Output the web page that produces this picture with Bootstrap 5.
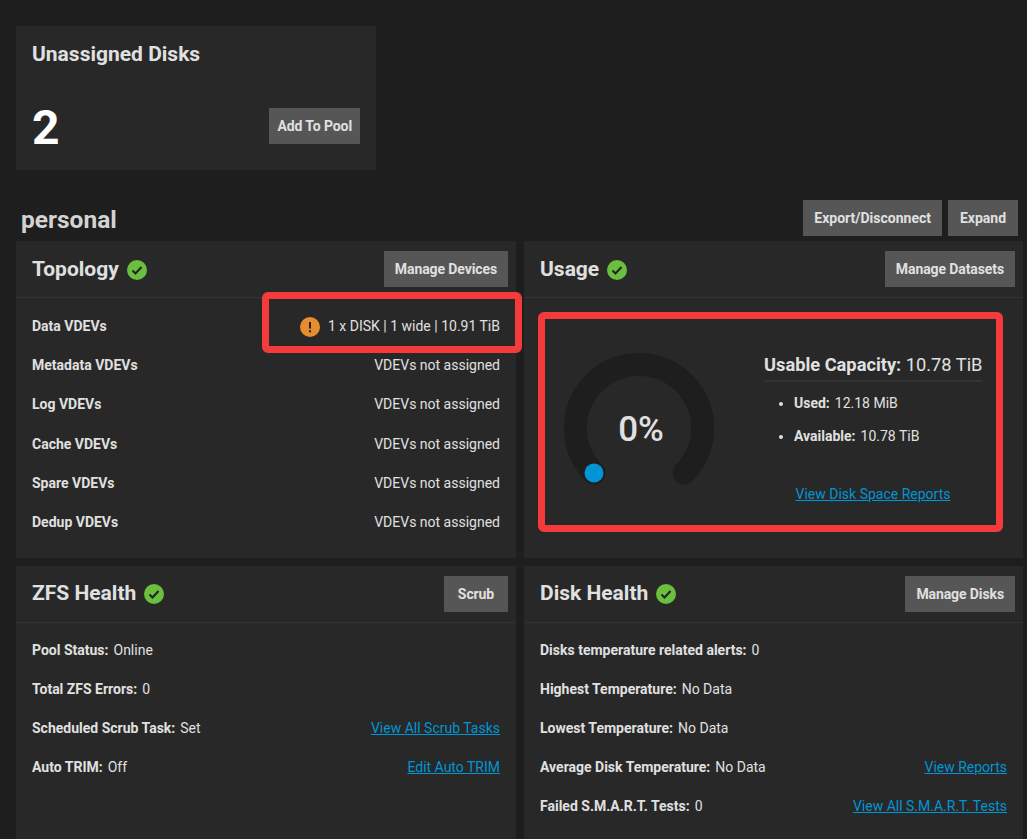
<!DOCTYPE html>
<html lang="en">
<head>
    <meta charset="UTF-8">
    <meta name="viewport" content="width=device-width, initial-scale=1.0">
    <title>Storage Dashboard</title>
    <link href="https://cdn.jsdelivr.net/npm/bootstrap@5.3.0/dist/css/bootstrap.min.css" rel="stylesheet">
    <style>
        body {
            background-color: #1e1e1e;
            color: #e0e0e0;
            font-family: Roboto, "Liberation Sans", sans-serif;
            font-size: 14px;
            position: relative;
            padding: 26px 4px 0 16px;
            height: 839px;
            overflow: hidden;
        }
        .panel {
            background-color: #282828;
            border: 0;
            border-radius: 0;
        }
        .unassigned {
            width: 360px;
            height: 144px;
            padding: 16px;
        }
        .unassigned h3 {
            font-size: 21px;
            font-weight: 700;
            line-height: 24px;
            margin: 0;
        }
        .big-num {
            font-size: 48px;
            font-weight: 700;
            line-height: 56px;
            color: #fff;
            margin: 2px 0 -2px;
        }
        .act-btn {
            background-color: #565656;
            color: #e0e0e0;
            border: 0;
            border-radius: 0;
            font-size: 14px;
            font-weight: 700;
            height: 36px;
            line-height: 36px;
            min-width: 64px;
            padding: 0 11px;
            white-space: nowrap;
        }
        .panel .act-btn {
            letter-spacing: -0.1px;
        }
        .pool-head {
            height: 41px;
            margin: 30px 5px 0 5px;
        }
        .pool-head h2 {
            font-size: 24.5px;
            font-weight: 700;
            margin: 5px 0 0;
            color: #d3d3d3;
        }
        .pool-btns {
            gap: 6px;
        }
        .pool-btns .act-btn:last-child {
            min-width: 70px;
        }
        .panels {
            display: grid;
            grid-template-columns: 500px 499px;
            grid-template-rows: 317px 273px;
            gap: 8px;
        }
        .panel-head {
            height: 57px;
            padding: 0 8px 0 16px;
            border-bottom: 1px solid #333;
        }
        .panel-head h3 {
            font-size: 21px;
            font-weight: 700;
            margin: 0;
        }
        .first-row h3 {
            padding-top: 2px;
        }
        .panel-rows {
            padding: 9px 16px 0;
        }
        .panel-rows.tight {
            padding-top: 8px;
        }
        .info-row {
            height: 39.2px;
        }
        .tight .info-row {
            height: 39px;
        }
        .info-row b, .cap-title b, .cap-list b {
            font-weight: 700;
            margin-right: 5px;
        }
        .info-row a, .report-link {
            color: #0095d5;
        }
        .usage-body {
            padding: 0 41px 0 40px;
            height: 260px;
        }
        .gauge-num {
            font-size: 35px;
            font-weight: 500;
            fill: #e0e0e0;
            font-family: Roboto, sans-serif;
        }
        .cap-col {
            width: 218px;
            height: 170px;
            margin-top: 16px;
        }
        .cap-title {
            font-size: 18.25px;
            line-height: 28px;
            padding-bottom: 1px;
            border-bottom: 2px solid #333;
            white-space: nowrap;
        }
        .cap-title b {
            margin-right: 0;
        }
        .cap-list {
            padding-left: 30px;
            margin: 5px 0 0;
        }
        .cap-list li {
            height: 33px;
            line-height: 33px;
        }
        .report-link {
            display: block;
            text-align: center;
            margin-top: 31px;
        }
        .callout {
            position: absolute;
            border: 7px solid #f43b3b;
            border-radius: 6px;
            pointer-events: none;
        }
        .callout-top {
            left: 262px;
            top: 292px;
            width: 260px;
            height: 61px;
        }
        .callout-usage {
            left: 538px;
            top: 312px;
            width: 465px;
            height: 220px;
        }
    </style>
</head>
<body>
    <div class="panel unassigned d-flex flex-column justify-content-between">
        <h3>Unassigned Disks</h3>
        <div class="d-flex justify-content-between align-items-center">
            <span class="big-num">2</span>
            <button class="act-btn px-2" type="button">Add To Pool</button>
        </div>
    </div>

    <div class="pool-head d-flex justify-content-between align-items-start">
        <h2>personal</h2>
        <div class="d-flex align-items-start pool-btns">
            <button class="act-btn" type="button">Export/Disconnect</button>
            <button class="act-btn" type="button">Expand</button>
        </div>
    </div>

    <div class="panels">
        <section class="panel first-row">
            <div class="panel-head d-flex justify-content-between align-items-center">
                <h3 class="d-flex align-items-center gap-2">Topology
                    <svg width="20" height="20" viewBox="0 0 20 20"><circle cx="10" cy="10" r="10" fill="#6bbf3f"/><path d="M5.5 10.5l3 3 6-6.5" fill="none" stroke="#222" stroke-width="2"/></svg>
                </h3>
                <button class="act-btn" type="button">Manage Devices</button>
            </div>
            <div class="panel-rows">
                <div class="info-row d-flex justify-content-between align-items-center">
                    <b>Data VDEVs</b>
                    <span class="d-flex align-items-center gap-2">
                        <svg width="20" height="20" viewBox="0 0 20 20"><circle cx="10" cy="10" r="10" fill="#e68d2f"/><path d="M10 5v6.5M10 13.2v2" stroke="#222" stroke-width="2" fill="none"/></svg>
                        1 x DISK | 1 wide | 10.91 TiB
                    </span>
                </div>
                <div class="info-row d-flex justify-content-between align-items-center"><b>Metadata VDEVs</b><span>VDEVs not assigned</span></div>
                <div class="info-row d-flex justify-content-between align-items-center"><b>Log VDEVs</b><span>VDEVs not assigned</span></div>
                <div class="info-row d-flex justify-content-between align-items-center"><b>Cache VDEVs</b><span>VDEVs not assigned</span></div>
                <div class="info-row d-flex justify-content-between align-items-center"><b>Spare VDEVs</b><span>VDEVs not assigned</span></div>
                <div class="info-row d-flex justify-content-between align-items-center"><b>Dedup VDEVs</b><span>VDEVs not assigned</span></div>
            </div>
        </section>

        <section class="panel first-row">
            <div class="panel-head d-flex justify-content-between align-items-center">
                <h3 class="d-flex align-items-center gap-2">Usage
                    <svg width="20" height="20" viewBox="0 0 20 20"><circle cx="10" cy="10" r="10" fill="#6bbf3f"/><path d="M5.5 10.5l3 3 6-6.5" fill="none" stroke="#222" stroke-width="2"/></svg>
                </h3>
                <button class="act-btn" type="button">Manage Datasets</button>
            </div>
            <div class="usage-body d-flex justify-content-between align-items-center">
                <svg width="150" height="150" viewBox="0 0 150 150">
                    <path d="M30 120A63.6 63.6 0 1 1 120 120" fill="none" stroke="#1e1e1e" stroke-width="23" stroke-linecap="round"/>
                    <circle cx="30" cy="120" r="9.5" fill="#0095d5"/>
                    <text x="77" y="88" text-anchor="middle" class="gauge-num">0%</text>
                </svg>
                <div class="cap-col">
                    <div class="cap-title"><b>Usable Capacity:</b> 10.78 TiB</div>
                    <ul class="cap-list">
                        <li><b>Used:</b>12.18 MiB</li>
                        <li><b>Available:</b>10.78 TiB</li>
                    </ul>
                    <a class="report-link" href="#">View Disk Space Reports</a>
                </div>
            </div>
        </section>

        <section class="panel">
            <div class="panel-head d-flex justify-content-between align-items-center">
                <h3 class="d-flex align-items-center gap-2">ZFS Health
                    <svg width="20" height="20" viewBox="0 0 20 20"><circle cx="10" cy="10" r="10" fill="#6bbf3f"/><path d="M5.5 10.5l3 3 6-6.5" fill="none" stroke="#222" stroke-width="2"/></svg>
                </h3>
                <button class="act-btn" type="button">Scrub</button>
            </div>
            <div class="panel-rows tight">
                <div class="info-row d-flex justify-content-between align-items-center"><span><b>Pool Status:</b>Online</span></div>
                <div class="info-row d-flex justify-content-between align-items-center"><span><b>Total ZFS Errors:</b>0</span></div>
                <div class="info-row d-flex justify-content-between align-items-center"><span><b>Scheduled Scrub Task:</b>Set</span><a href="#">View All Scrub Tasks</a></div>
                <div class="info-row d-flex justify-content-between align-items-center"><span><b>Auto TRIM:</b>Off</span><a href="#">Edit Auto TRIM</a></div>
            </div>
        </section>

        <section class="panel">
            <div class="panel-head d-flex justify-content-between align-items-center">
                <h3 class="d-flex align-items-center gap-2">Disk Health
                    <svg width="20" height="20" viewBox="0 0 20 20"><circle cx="10" cy="10" r="10" fill="#6bbf3f"/><path d="M5.5 10.5l3 3 6-6.5" fill="none" stroke="#222" stroke-width="2"/></svg>
                </h3>
                <button class="act-btn" type="button">Manage Disks</button>
            </div>
            <div class="panel-rows tight">
                <div class="info-row d-flex justify-content-between align-items-center"><span><b>Disks temperature related alerts:</b>0</span></div>
                <div class="info-row d-flex justify-content-between align-items-center"><span><b>Highest Temperature:</b>No Data</span></div>
                <div class="info-row d-flex justify-content-between align-items-center"><span><b>Lowest Temperature:</b>No Data</span></div>
                <div class="info-row d-flex justify-content-between align-items-center"><span><b>Average Disk Temperature:</b>No Data</span><a href="#">View Reports</a></div>
                <div class="info-row d-flex justify-content-between align-items-center"><span><b>Failed S.M.A.R.T. Tests:</b>0</span><a href="#">View All S.M.A.R.T. Tests</a></div>
            </div>
        </section>
    </div>

    <div class="callout callout-top"></div>
    <div class="callout callout-usage"></div>

    <script src="https://cdn.jsdelivr.net/npm/bootstrap@5.3.0/dist/js/bootstrap.bundle.min.js"></script>
</body>
</html>
